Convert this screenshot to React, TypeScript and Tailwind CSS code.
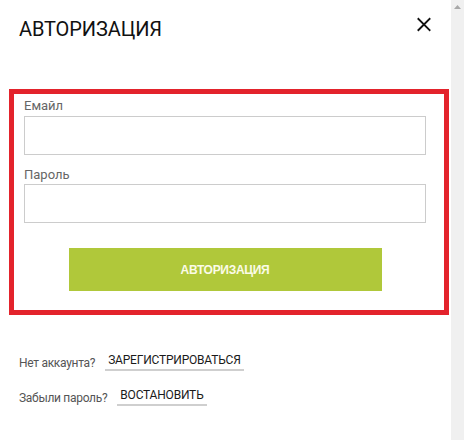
import React from "react";

export default function App() {
  return (
    <div className="w-[464px] h-[440px] flex bg-white overflow-hidden" style={{ fontFamily: "Roboto, 'Noto Sans', sans-serif" }}>
      <div className="flex-1 flex flex-col">
        <div className="flex items-start justify-between pt-[17px] pl-[19px] pr-[20px]">
          <h1 className="text-[20px] leading-[24px] text-[#111] font-normal tracking-[-0.1px]">АВТОРИЗАЦИЯ</h1>
          <button className="mt-[0px] w-[14px] h-[14px] flex items-center justify-center" aria-label="close">
            <svg width="15" height="15" viewBox="0 0 15 15">
              <path d="M1.5 1.5 L13.5 13.5 M13.5 1.5 L1.5 13.5" stroke="#111" strokeWidth="2" strokeLinecap="square" />
            </svg>
          </button>
        </div>

        <div className="ml-[9px] mt-[48px] w-[440px] h-[226px] border-[5px] border-[#e3232c] pl-[10px] pt-[4px] flex flex-col">
          <label className="text-[13px] leading-[16px] text-[#666]">Емайл</label>
          <div className="mt-[2px] w-[402px] h-[39px] border border-[#cccccc] bg-white" />
          <label className="mt-[12px] text-[13px] leading-[16px] text-[#666]">Пароль</label>
          <div className="mt-[1px] w-[402px] h-[39px] border border-[#cccccc] bg-white" />
          <div className="w-[402px] flex justify-center mt-[25px]">
            <button
              className="w-[313px] h-[43px] bg-[#b0c83a] text-[#fbfbe8] text-[12px] font-bold tracking-[-0.3px]"
              style={{ fontFamily: "'Liberation Sans', Arial, sans-serif" }}
            >
              АВТОРИЗАЦИЯ
            </button>
          </div>
        </div>

        <div className="pl-[19px] mt-[38px] flex flex-col gap-[17px]">
          <div className="flex items-end">
            <span className="text-[12px] leading-[15px] text-[#555] tracking-[-0.3px]">Нет аккаунта?</span>
            <span className="ml-[10px] px-[3px] text-[12px] leading-[15px] text-[#1a1a1a] border-b-2 border-[#cfcfcf] pb-[1px] tracking-[-0.2px]">ЗАРЕГИСТРИРОВАТЬСЯ</span>
          </div>
          <div className="flex items-end">
            <span className="text-[12px] leading-[15px] text-[#555] tracking-[-0.3px]">Забыли пароль?</span>
            <span className="ml-[10px] px-[3px] text-[12px] leading-[15px] text-[#1a1a1a] border-b-2 border-[#cfcfcf] pb-[1px] tracking-[-0.2px]">ВОСТАНОВИТЬ</span>
          </div>
        </div>
      </div>
      <div className="w-[13px] h-full bg-[#f0f0f0] flex justify-center pt-[5px]">
        <svg width="7" height="4" viewBox="0 0 7 4">
          <path d="M3.5 0 L7 4 L0 4 Z" fill="#a8a8a8" />
        </svg>
      </div>
    </div>
  );
}
